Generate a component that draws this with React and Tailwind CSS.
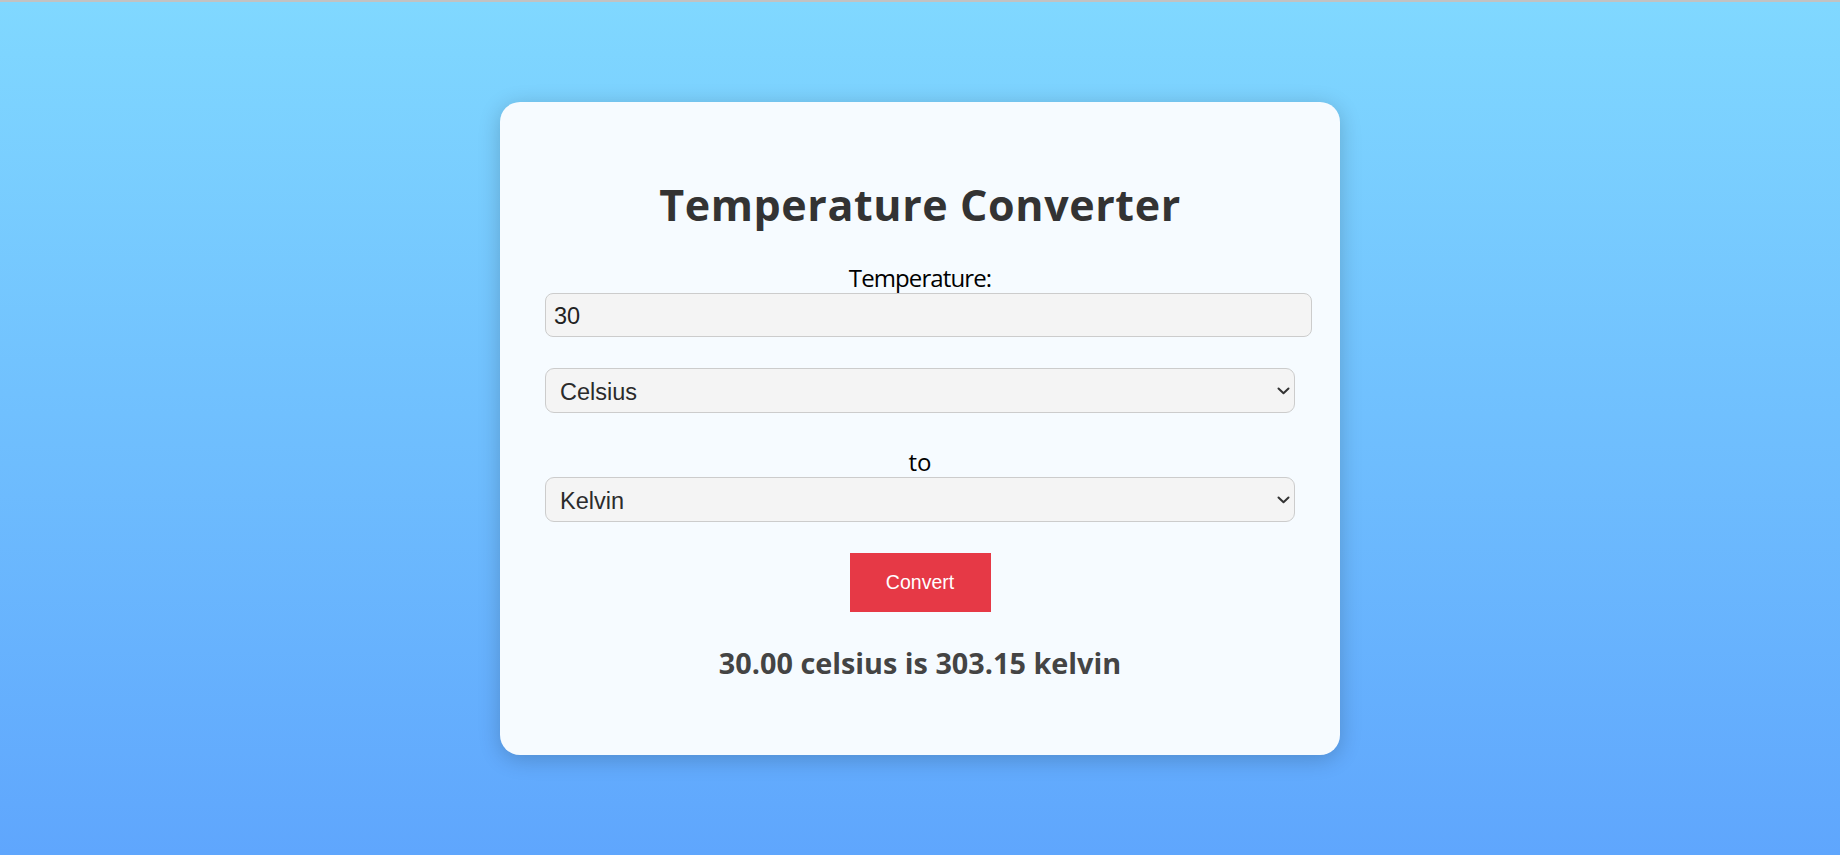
import React from "react";

function Chevron() {
  return (
    <svg width="13" height="8" viewBox="0 0 13 8" className="pointer-events-none absolute right-[5px] top-1/2 -translate-y-1/2">
      <path d="M1.5 1.5 L6.5 6.2 L11.5 1.5" fill="none" stroke="#333" strokeWidth="2" strokeLinecap="round" strokeLinejoin="round" />
    </svg>
  );
}

function Select({ value }) {
  return (
    <div className="relative w-[750px] h-[45px]">
      <div
        className="w-full h-full rounded-[9px] border border-[#cccccc] bg-[#f4f4f4] pl-[14px] pt-[4px] flex items-center text-[23.5px] text-[#2b2b2b]"
        style={{ fontFamily: '"Liberation Sans", Arial, sans-serif' }}
      >
        {value}
      </div>
      <Chevron />
    </div>
  );
}

export default function App() {
  const seg = { fontFamily: '"Open Sans", "Noto Sans", sans-serif' };
  return (
    <div className="min-h-screen flex flex-col">
      <div className="h-[2px] bg-[#c2c2c2]" />
      <div className="flex-1 h-[853px] bg-[linear-gradient(to_bottom,#80d8ff,#5fa6fd)] flex items-center justify-center">
        <div className="w-[840px] rounded-[20px] bg-[#f6fbff] shadow-[0_4px_22px_rgba(0,0,0,0.2)] pt-[77px] pb-[75px] px-[45px] flex flex-col items-start">
          <h1
            className="w-[750px] text-center text-[43px] leading-[52px] font-bold text-[#333333] tracking-[0.6px]"
            style={seg}
          >
            Temperature Converter
          </h1>
          <div
            className="w-[750px] text-center text-[24px] leading-[27px] text-black mt-[33px] tracking-[-0.9px]"
            style={seg}
          >
            Temperature:
          </div>
          <div
            className="mt-[2px] w-[767px] h-[44px] rounded-[8px] border border-[#cccccc] bg-[#f4f4f4] pl-[8px] pt-[3px] flex items-center text-[23.5px] text-[#222222]"
            style={{ fontFamily: '"Liberation Sans", Arial, sans-serif' }}
          >
            30
          </div>
          <div className="mt-[31px]">
            <Select value="Celsius" />
          </div>
          <div
            className="w-[750px] text-center text-[24px] leading-[27px] text-black mt-[35px]"
            style={seg}
          >
            to
          </div>
          <div className="mt-[2px]">
            <Select value="Kelvin" />
          </div>
          <div className="w-[750px] flex justify-center mt-[31px]">
            <button
              className="w-[141px] h-[59px] bg-[#e63946] text-white text-[19.5px] pt-[1px]"
              style={{ fontFamily: '"Liberation Sans", Arial, sans-serif' }}
            >
              Convert
            </button>
          </div>
          <div
            className="w-[750px] text-center text-[28.8px] leading-[34px] font-bold text-[#444444] mt-[34px]"
            style={seg}
          >
            30.00 celsius is 303.15 kelvin
          </div>
        </div>
      </div>
    </div>
  );
}
